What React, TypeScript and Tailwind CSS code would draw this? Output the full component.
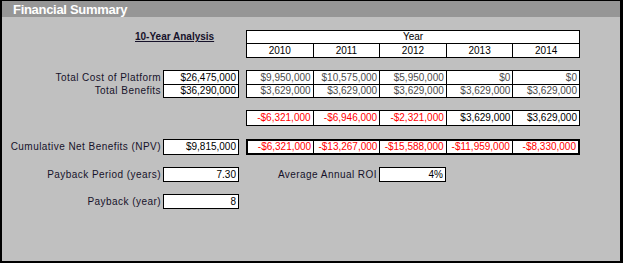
const years = ["2010", "2011", "2012", "2013", "2014"];

type Cell = { v: string; red?: boolean; strong?: boolean };

const costs: Cell[] = [
  { v: "$9,950,000" },
  { v: "$10,575,000" },
  { v: "$5,950,000" },
  { v: "$0" },
  { v: "$0" },
];

const benefits: Cell[] = years.map(() => ({ v: "$3,629,000" }));

const net: Cell[] = [
  { v: "-$6,321,000", red: true },
  { v: "-$6,946,000", red: true },
  { v: "-$2,321,000", red: true },
  { v: "$3,629,000", strong: true },
  { v: "$3,629,000", strong: true },
];

const cumulative: Cell[] = [
  { v: "-$6,321,000", red: true },
  { v: "-$13,267,000", red: true },
  { v: "-$15,588,000", red: true },
  { v: "-$11,959,000", red: true },
  { v: "-$8,330,000", red: true },
];

function tone(c: Cell) {
  if (c.red) return "text-[#ff0000]";
  if (c.strong) return "text-black";
  return "text-[#4a4a4a]";
}

function Label({ text, w = "w-[161px]" }: { text: string; w?: string }) {
  return (
    <div className={`${w} shrink-0 pr-[2px] text-right text-[10px] leading-none tracking-[0.45px] text-[#16122a]`}>
      {text}
    </div>
  );
}

function Box({ value, w = "w-[76px]", h = "h-[15px]" }: { value: string; w?: string; h?: string }) {
  return (
    <div className={`${w} ${h} shrink-0 border border-black bg-white flex items-center justify-end pr-[2px] text-[10px] leading-none text-black`}>
      {value}
    </div>
  );
}

export default function App() {
  return (
    <div
      className="w-[623px] h-[263px] border-l-2 border-r-[3px] border-t border-b-2 border-black bg-[#c0c0c0] overflow-hidden"
      style={{ fontFamily: '"Liberation Sans", Arial, sans-serif' }}
    >
      {/* title bar */}
      <div className="h-[16px] bg-[#969696] pl-[11px] text-[13px] leading-[17px] font-bold tracking-[-0.3px] text-white">
        Financial Summary
      </div>

      {/* heading + year header */}
      <div className="mt-[13px] flex">
        <div className="w-[244px] shrink-0 pl-[133px]">
          <span className="block h-[13px] text-[10px] leading-[14px] font-bold underline underline-offset-1 text-[#16122a]">
            10-Year Analysis
          </span>
        </div>
        <div className="w-[334px] grid grid-cols-5 gap-px bg-black p-px">
          <div className="col-span-5 h-[12px] bg-white flex items-center justify-center text-[10px] leading-none text-black">
            Year
          </div>
          {years.map((y) => (
            <div key={y} className="h-[13px] bg-white flex items-center justify-center text-[10px] leading-none text-black">
              {y}
            </div>
          ))}
        </div>
      </div>

      {/* totals */}
      <div className="mt-[12px] flex">
        <div className="w-[161px] shrink-0 flex flex-col gap-px pt-px">
          <div className="h-[13px] flex items-center justify-end"><Label text="Total Cost of Platform" /></div>
          <div className="h-[12px] flex items-center justify-end"><Label text="Total Benefits" /></div>
        </div>
        <div className="w-[76px] shrink-0 grid gap-px bg-black p-px">
          <div className="h-[13px] bg-white flex items-center justify-end pr-[2px] text-[10px] leading-none text-black">$26,475,000</div>
          <div className="h-[12px] bg-white flex items-center justify-end pr-[2px] text-[10px] leading-none text-black">$36,290,000</div>
        </div>
        <div className="w-[7px] shrink-0" />
        <div className="w-[334px] grid grid-cols-5 gap-px bg-black p-px">
          {costs.map((c, i) => (
            <div key={"c" + i} className={`h-[13px] bg-white flex items-center justify-end pr-[2px] text-[10px] leading-none ${tone(c)}`}>
              {c.v}
            </div>
          ))}
          {benefits.map((c, i) => (
            <div key={"b" + i} className={`h-[12px] bg-white flex items-center justify-end pr-[2px] text-[10px] leading-none ${tone(c)}`}>
              {c.v}
            </div>
          ))}
        </div>
      </div>

      {/* yearly net */}
      <div className="mt-[12px] flex">
        <div className="w-[244px] shrink-0" />
        <div className="w-[334px] grid grid-cols-5 gap-px bg-black p-px">
          {net.map((c, i) => (
            <div key={i} className={`h-[14px] bg-white flex items-center justify-end pr-[2px] text-[10px] leading-none ${tone(c)}`}>
              {c.v}
            </div>
          ))}
        </div>
      </div>

      {/* cumulative */}
      <div className="mt-[13px] flex items-center">
        <Label text="Cumulative Net Benefits (NPV)" />
        <Box value="$9,815,000" h="h-[16px]" />
        <div className="w-[7px] shrink-0" />
        <div className="w-[334px] grid grid-cols-5 gap-px bg-black p-[2px]">
          {cumulative.map((c, i) => (
            <div key={i} className={`h-[12px] bg-white flex items-center justify-end pr-[2px] text-[10px] leading-none ${tone(c)}`}>
              {c.v}
            </div>
          ))}
        </div>
      </div>

      {/* payback */}
      <div className="mt-[12px] flex items-center">
        <Label text="Payback Period (years)" />
        <Box value="7.30" />
        <Label text="Average Annual ROI" w="w-[140px]" />
        <Box value="4%" w="w-[67px]" />
      </div>

      <div className="mt-[12px] flex items-center">
        <Label text="Payback (year)" />
        <Box value="8" />
      </div>
    </div>
  );
}
